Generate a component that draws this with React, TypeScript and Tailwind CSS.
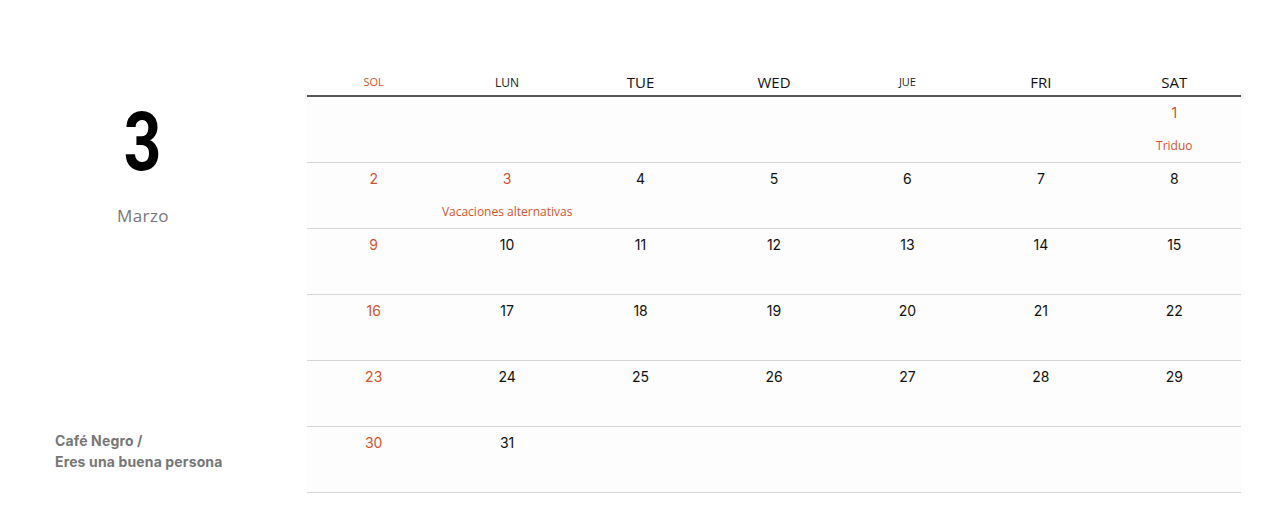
const RED = "text-[#d4532f]";

type Cell = { day?: number; note?: string; red?: boolean };

const headers = [
  { label: "SOL", cls: "text-[11px] text-[#d4532f]" },
  { label: "LUN", cls: "text-[12px] text-[#222]" },
  { label: "TUE", cls: "text-[15px] text-[#111]" },
  { label: "WED", cls: "text-[15px] text-[#111]" },
  { label: "JUE", cls: "text-[11px] text-[#222]" },
  { label: "FRI", cls: "text-[15px] text-[#111]" },
  { label: "SAT", cls: "text-[15px] text-[#111]" },
];

function buildWeeks(): Cell[][] {
  const cells: Cell[] = [];
  for (let i = 0; i < 6; i++) cells.push({});
  for (let d = 1; d <= 31; d++) {
    const c: Cell = { day: d };
    if (d === 1) {
      c.note = "Triduo";
      c.red = true;
    }
    if (d === 3) {
      c.note = "Vacaciones alternativas";
      c.red = true;
    }
    cells.push(c);
  }
  while (cells.length % 7 !== 0) cells.push({});
  const weeks: Cell[][] = [];
  for (let i = 0; i < cells.length; i += 7) weeks.push(cells.slice(i, i + 7));
  return weeks;
}

export default function App() {
  const weeks = buildWeeks();

  return (
    <div className="w-[1280px] h-[522px] bg-white flex font-['Inter',sans-serif] overflow-hidden">
      <aside className="w-[286px] shrink-0 flex flex-col">
        <div className="pt-[96px] flex flex-col items-center">
          <div className="inline-block scale-x-[0.8] text-[82px] leading-[92px] font-bold text-black font-['Roboto',sans-serif]">3</div>
          <div className="mt-[15px] text-[17px] text-[#777] tracking-wide font-['Open_Sans',sans-serif]">Marzo</div>
        </div>
        <div className="mt-auto mb-[50px] pl-[55px] text-[14px] leading-[21px] font-bold text-[#777] tracking-[0.01em]">
          <div>Café Negro /</div>
          <div>Eres una buena persona</div>
        </div>
      </aside>

      <main className="ml-[21px] w-[934px] pt-[70px]">
        <div className="grid grid-cols-7 h-[27px] items-center border-b-2 border-[#555]">
          {headers.map((h) => (
            <div key={h.label} className={`text-center font-['Open_Sans',sans-serif] ${h.cls}`}>
              {h.label}
            </div>
          ))}
        </div>

        {weeks.map((week, wi) => (
          <div key={wi} className="grid grid-cols-7 h-[66px] border-b border-[#d6d6d6] bg-[#fdfdfd]">
            {week.map((c, ci) => {
              const red = ci === 0 || c.red;
              return (
                <div key={ci} className="flex flex-col items-center pt-[6px]">
                  {c.day && (
                    <div className={`text-[14px] leading-[20px] ${red ? RED : "text-[#111]"}`}>{c.day}</div>
                  )}
                  {c.note && (
                    <div className={`mt-[15px] text-[12px] leading-[16px] whitespace-nowrap font-['Open_Sans',sans-serif] ${RED}`}>
                      {c.note}
                    </div>
                  )}
                </div>
              );
            })}
          </div>
        ))}
      </main>
    </div>
  );
}
